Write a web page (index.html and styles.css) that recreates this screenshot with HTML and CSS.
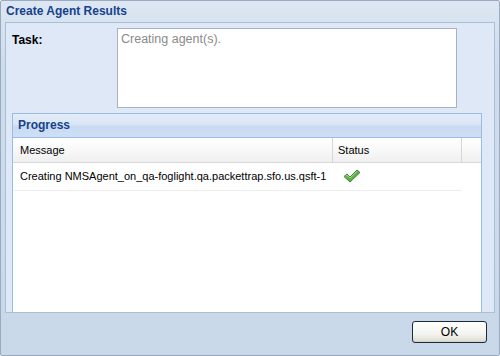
FILE: index.html
```html
<!DOCTYPE html>
<html lang="en">
<head>
	<meta charset="UTF-8">
	<title>Create Agent Results</title>
	<link rel="stylesheet" href="styles.css">
</head>
<body>
	<div class="window">
		<div class="window-title">Create Agent Results</div>
		<div class="window-body">
			<div class="task-row">
				<label class="task-label" for="task">Task:</label>
				<textarea class="task-text" id="task" readonly placeholder="Creating agent(s)."></textarea>
			</div>
			<div class="panel">
				<div class="panel-header">Progress</div>
				<div class="grid">
					<div class="grid-head">
						<div class="col col-msg">Message</div>
						<div class="col col-status">Status</div>
						<div class="col col-rest"></div>
					</div>
					<div class="grid-row">
						<div class="col col-msg">Creating NMSAgent_on_qa-foglight.qa.packettrap.sfo.us.qsft-1</div>
						<div class="col col-status">
							<svg class="check" width="18" height="14" viewBox="0 0 18 14">
								<path d="M1 7.5 L4 5 L7 8 L14 1 L17 3.5 L7 13 Z" fill="#5fae4a" stroke="#3f8a34" stroke-width="1" stroke-linejoin="round"/>
								<path d="M2.5 7.3 L4 6.2 L7 9 L14 2.3" fill="none" stroke="#a6dc8c" stroke-width="1"/>
							</svg>
						</div>
					</div>
				</div>
			</div>
		</div>
		<div class="window-footer">
			<button class="btn" type="button">OK</button>
		</div>
	</div>
</body>
</html>
```

FILE: styles.css
```css
body {
	margin: 0;
	padding: 0;
	background-color: #fff;
	font-family: "Liberation Sans", Arial, sans-serif;
	font-size: 11px;
}

.window {
	display: flex;
	flex-direction: column;
	box-sizing: border-box;
	width: 500px;
	height: 356px;
	padding: 0 4px;
	border: 1px solid #9aa9bd;
	border-radius: 2px;
	background: linear-gradient(#dde7f3, #cfdcec 60px, #c9d8e9);
}

.window-title {
	height: 21px;
	padding-left: 1px;
	color: #15428b;
	font-size: 12px;
	font-weight: bold;
	line-height: 21px;
}

.window-body {
	display: flex;
	flex-direction: column;
	flex: 1;
	padding: 5px 0 0 6px;
	border: 1px solid #a9bfd6;
	border-bottom-color: #aebfd2;
	background-color: #dfe8f6;
}

.task-row {
	display: flex;
}
.task-label {
	width: 105px;
	padding-top: 5px;
	color: #000;
	font-size: 12px;
	font-weight: bold;
}
.task-text {
	box-sizing: border-box;
	width: 340px;
	height: 80px;
	margin: 0;
	padding: 3px 3px;
	border: 1px solid #a6b3c6;
	background-color: #fff;
	font-family: "Liberation Sans", Arial, sans-serif;
	font-size: 12.5px;
	resize: none;
	outline: none;
}
.task-text::placeholder {
	color: #8a8a8a;
}

.panel {
	display: flex;
	flex-direction: column;
	flex: 1;
	width: 470px;
	box-sizing: border-box;
	margin-top: 5px;
	border: 1px solid #99bbe8;
	border-bottom: 0;
	background-color: #fff;
}
.panel-header {
	height: 23px;
	padding-left: 5px;
	border-bottom: 1px solid #99bbe8;
	background: linear-gradient(#e3ecf8, #dae6f6 45%, #c8daf2 55%, #cfdff5);
	color: #15428b;
	font-size: 12px;
	font-weight: bold;
	line-height: 22px;
}

.grid {
	flex: 1;
	background-color: #fff;
}
.grid-head {
	display: flex;
	height: 24px;
	border-bottom: 1px solid #d8d8d8;
	background: linear-gradient(#ffffff, #f8f8f8 50%, #efefef);
	line-height: 24px;
}
.grid-row {
	display: flex;
	width: 449px;
	height: 27px;
	border-bottom: 1px solid #eeeeee;
	line-height: 27px;
}
.col {
	box-sizing: border-box;
	padding-left: 7px;
	white-space: nowrap;
	overflow: hidden;
}
.col-msg {
	width: 320px;
}
.col-status {
	width: 129px;
	padding-left: 5px;
}
.grid-row .col-status {
	padding-left: 10px;
}
.grid-head .col-msg,
.grid-head .col-status {
	border-right: 1px solid #d6d6d6;
}
.col-rest {
	flex: 1;
}
.check {
	vertical-align: middle;
	margin-top: -2px;
}

.window-footer {
	display: flex;
	justify-content: flex-end;
	height: 42px;
	padding: 8px 8px 0 0;
	box-sizing: border-box;
}
.btn {
	width: 75px;
	height: 22px;
	border: 1px solid #1c2b3c;
	border-radius: 3px;
	background: linear-gradient(#ffffff, #f4f4f0 60%, #dcdad3);
	color: #000;
	font-family: "Liberation Sans", Arial, sans-serif;
	font-size: 12px;
	box-shadow: inset 0 -1px 0 #d6d0c5;
}
```
